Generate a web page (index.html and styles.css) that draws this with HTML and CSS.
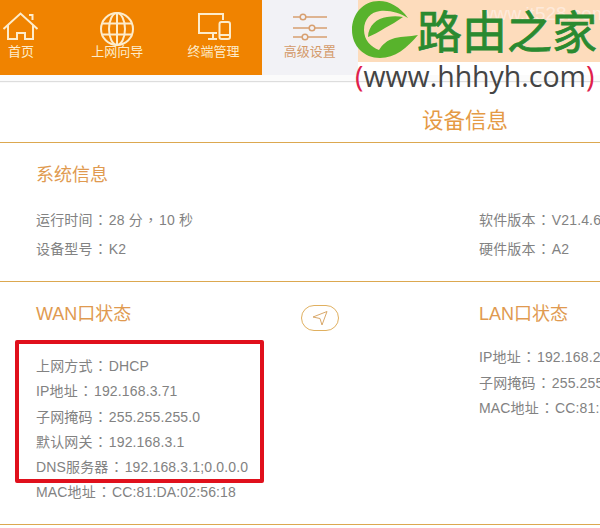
FILE: index.html
```html
<!DOCTYPE html>
<html lang="en">
<head>
    <meta charset="UTF-8">
    <meta name="viewport" content="width=device-width, initial-scale=1.0">
    <title>设备信息</title>
    <link rel="stylesheet" href="styles.css">
</head>
<body>

    <!-- Header -->
    <header class="header">
        <nav class="navbar">
            <a class="nav-item" href="#">
                <svg class="nav-icon" viewBox="0 0 44 32">
                    <path d="M4.500 17 L21.500 1.500 L38.500 17 M9 13.500 V27 H18 V21 H26 V27 H34 V13.500 M30 3 H33.500 V8"/>
                </svg>
                <span>首页</span>
            </a>
            <a class="nav-item" href="#">
                <svg class="nav-icon" viewBox="0 0 44 32">
                    <circle cx="22" cy="17" r="16"/>
                    <ellipse cx="22" cy="17" rx="8" ry="16"/>
                    <path d="M22 1 V33 M7.500 11.500 H36.500 M7.500 22.500 H36.500"/>
                </svg>
                <span>上网向导</span>
            </a>
            <a class="nav-item" href="#">
                <svg class="nav-icon" viewBox="0 0 44 32">
                    <path d="M31 8 V2 H7 V21 H25 M16 27 H25 M21 21 V27"/>
                    <rect x="27.500" y="10" width="10.500" height="17" rx="2"/>
                    <path d="M27.500 23 H38"/>
                </svg>
                <span>终端管理</span>
            </a>
            <a class="nav-item active" href="#">
                <svg class="nav-icon" viewBox="0 0 44 32">
                    <path d="M5 5 H12 M18 5 H39 M5 16 H21 M27 16 H39 M5 25 H14 M20 25 H39"/>
                    <circle cx="15" cy="5" r="2.800"/>
                    <circle cx="24" cy="16" r="2.800"/>
                    <circle cx="17" cy="25" r="2.800"/>
                </svg>
                <span>高级设置</span>
            </a>
        </nav>
    </header>

    <!-- Device info -->
    <main class="content">
        <h2 class="page-title">设备信息</h2>

        <section class="panel panel-system">
            <div class="col-left">
                <h3>系统信息</h3>
                <div class="rows rows-wide">
                    <p>运行时间<span class="punct">：</span>28 分<span class="punct">，</span>10 秒</p>
                    <p>设备型号<span class="punct">：</span>K2</p>
                </div>
            </div>
            <div class="col-right">
                <div class="rows rows-wide rows-system">
                    <p>软件版本<span class="punct">：</span>V21.4.6</p>
                    <p>硬件版本<span class="punct">：</span>A2</p>
                </div>
            </div>
        </section>

        <section class="panel panel-status">
            <div class="col-left col-wan">
                <div>
                    <h3>WAN口状态</h3>
                    <div class="rows rows-wan">
                        <p>上网方式<span class="punct">：</span>DHCP</p>
                        <p>IP地址<span class="punct">：</span>192.168.3.71</p>
                        <p>子网掩码<span class="punct">：</span>255.255.255.0</p>
                        <p>默认网关<span class="punct">：</span>192.168.3.1</p>
                        <p>DNS服务器<span class="punct">：</span>192.168.3.1;0.0.0.0</p>
                        <p>MAC地址<span class="punct">：</span>CC:81:DA:02:56:18</p>
                    </div>
                </div>
                <button class="link-btn">
                    <svg viewBox="0 0 16 16" width="16" height="16"><path d="M15 1.500 L1 7 L8 8.500 L10 15 Z"/></svg>
                </button>
            </div>
            <div class="col-right">
                <h3>LAN口状态</h3>
                <div class="rows rows-lan">
                    <p>IP地址<span class="punct">：</span>192.168.2.1</p>
                    <p>子网掩码<span class="punct">：</span>255.255.255.0</p>
                    <p>MAC地址<span class="punct">：</span>CC:81:DA:02:56:10</p>
                </div>
            </div>
        </section>
    </main>

    <!-- Red highlight over the WAN rows -->
    <div class="highlight"></div>

    <!-- Site watermark -->
    <div class="watermark">
        <span class="watermark-url">www.it528.com</span>
        <svg class="logo" viewBox="0 0 80 62">
            <path d="M63 18 C55 7 45 1 34 1 C18 1 7 14 7 30 C7 46 19 58 35 58 C50 58 62 48 73 35 C64 37 58 36 50 38 C42 40 37 45 34 50 C26 47 19 40 19 30 C19 19 26 12 35 11 C45 10 55 13 63 18 Z"/>
            <path d="M23 37 C23 26 32 18 42 17 C48 16 53 16 58 17 C52 21 46 25 40 28 C34 32 28 35 23 37 Z"/>
        </svg>
        <span class="logo-text">路由之家</span>
        <span class="logo-url"><i>(</i>www.hhhyh.com<i>)</i></span>
    </div>

</body>
</html>
```

FILE: styles.css
```css
html, body {
    margin: 0;
    height: 528px;
    overflow: hidden;
}

body {
    position: relative;
    background-color: #fff;
    font-family: "Liberation Sans", "Noto Sans CJK SC", sans-serif;
}

/* Header */
.header {
    height: 75px;
    border-bottom: 6px solid #fbfbfb;
    box-shadow: 0 1px 1px #ddd;
}

.navbar {
    display: flex;
    margin-left: -27px;
    width: 385px;
    height: 75px;
    background-color: #f08300;
}

.nav-item {
    display: flex;
    flex-direction: column;
    align-items: center;
    width: 96.300px;
    padding-top: 12px;
    box-sizing: border-box;
    color: #fdeccb;
    text-decoration: none;
    font-size: 13px;
    line-height: 18px;
}

.nav-item.active {
    background-color: #f2f2f6;
    color: #d49a6a;
}

.nav-icon {
    width: 44px;
    height: 32px;
    margin-bottom: -1px;
    overflow: visible;
    fill: none;
    stroke: #fdeccb;
    stroke-width: 2;
}

.active .nav-icon {
    stroke: #d8a070;
    stroke-width: 1.500;
}

/* Content */
.content {
    width: 930px;
}

.page-title {
    margin: 0;
    height: 62px;
    box-sizing: border-box;
    padding-top: 25px;
    border-bottom: 1px solid #dca850;
    text-align: center;
    font-size: 21.500px;
    line-height: 30px;
    font-weight: normal;
    color: #e59a45;
}

.panel {
    display: flex;
    padding-left: 36px;
    border-bottom: 1px solid #dca850;
}

.panel-system {
    height: 138px;
}

.panel-status {
    height: 242px;
}

.col-left {
    width: 443px;
}

.col-wan {
    display: flex;
}

.col-wan > div {
    width: 265px;
}

.panel h3 {
    margin: 20px 0 0;
    font-size: 18px;
    line-height: 24px;
    font-weight: normal;
    color: #e09a50;
}

.rows {
    font-size: 14px;
    letter-spacing: 0.150px;
    color: #828282;
    white-space: nowrap;
}

.rows p {
    margin: 0;
}

/* centred colon and comma, as the traditional CJK face draws them */
.punct {
    padding: 0 1px;
    font-family: "Noto Sans CJK TC", sans-serif;
    line-height: 1;
}

.rows-wide {
    margin-top: 19px;
    line-height: 29px;
}

.rows-system {
    margin-top: 63px;
}

.rows-wan {
    margin-top: 28px;
    line-height: 25.250px;
}

.rows-lan {
    margin-top: 19px;
    line-height: 25.500px;
}

.link-btn {
    width: 38px;
    height: 26px;
    margin-top: 23px;
    padding: 0;
    display: flex;
    align-items: center;
    justify-content: center;
    background: #fff;
    border: 1px solid #e0b060;
    border-radius: 13px;
}

.link-btn svg {
    fill: none;
    stroke: #d9a86a;
    stroke-width: 1;
}

/* Red box laid over the rows */
.highlight {
    position: absolute;
    left: 15px;
    top: 340px;
    width: 241px;
    height: 135px;
    border: 4px solid #e0101c;
    border-radius: 2px;
}

/* Watermark laid over the page */
.watermark {
    position: absolute;
    left: 358px;
    top: 0;
    width: 242px;
    height: 62px;
    background-color: #fddcbc;
}

.watermark-url {
    position: absolute;
    left: 122px;
    top: 3px;
    font-size: 19px;
    color: #fdeadb;
    white-space: nowrap;
}

.logo {
    position: absolute;
    left: -13px;
    top: 0;
    width: 80px;
    height: 62px;
    fill: #58b32c;
}

.logo-text {
    position: absolute;
    left: 59px;
    top: 2px;
    font-family: "Noto Sans CJK SC", sans-serif;
    font-size: 45px;
    line-height: 56px;
    color: #2a8a30;
    -webkit-text-stroke: 0.800px #2a8a30;
    white-space: nowrap;
}

.logo-url {
    position: absolute;
    left: -3px;
    top: 58px;
    font-family: "Open Sans", sans-serif;
    font-size: 28.500px;
    line-height: 36px;
    color: #444;
    white-space: nowrap;
}

.logo-url i {
    font-style: normal;
    color: #e0204c;
}
```
